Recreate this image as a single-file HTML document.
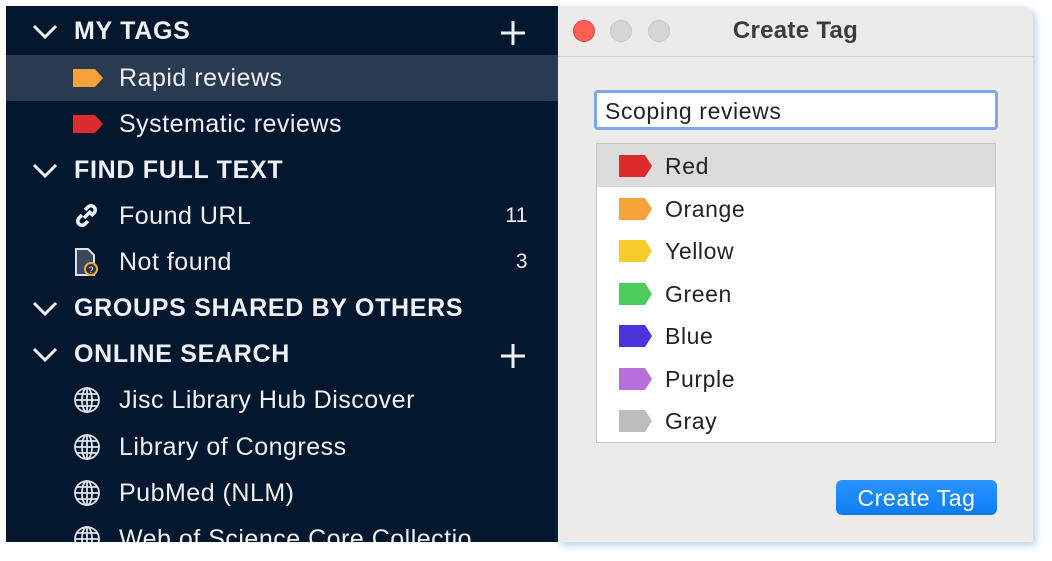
<!DOCTYPE html>
<html><head><style>
body{margin:0;width:1052px;height:561px;background:#fff;position:relative;overflow:hidden;font-family:"Liberation Sans",sans-serif}
#side{position:absolute;left:6px;top:6px;width:552px;height:536px;background:#03172e;overflow:hidden;color:#eef0f3}
.row{position:absolute;left:0;width:552px;height:46px;font-size:25px;line-height:46px;letter-spacing:0.5px;white-space:nowrap}
.hdr{font-weight:bold;font-size:25px;letter-spacing:0.7px}
.hdr .txt{left:68px}
.txt{position:absolute;left:113px;top:0}
.cnt{position:absolute;right:30px;top:0;font-size:21px}
.chev{position:absolute;left:26px;top:16px}
.plus{position:absolute;left:494px;top:12px}
.ic{position:absolute;left:67px;top:13px}
#dlg{position:absolute;left:558px;top:6px;width:475px;height:536px;background:#ecebea;border-top-right-radius:12px;box-shadow:3px 3px 8px rgba(80,150,220,.45)}
#tb{position:absolute;left:0;top:0;width:475px;height:50px;border-bottom:1px solid #d2d1d0}
.dot{position:absolute;top:14px;width:22px;height:22px;border-radius:50%;background:#d6d5d4;border:1px solid #c4c3c2;box-sizing:border-box}
#title{position:absolute;left:0;width:475px;top:11px;text-align:center;font-weight:bold;font-size:24px;color:#3c3c3c;padding-left:120px;box-sizing:border-box;padding-right:120px;letter-spacing:0.3px}
#field{position:absolute;left:36px;top:84px;width:404px;height:40px;border:3px solid #7fa7ea;border-radius:4px;box-sizing:border-box;background:#fff;font-size:23px;line-height:36px;padding-left:8px;color:#222;letter-spacing:0.6px}
#list{position:absolute;left:38px;top:137px;width:400px;height:300px;background:#fff;border:1px solid #c6c6c6;box-sizing:border-box}
.it{position:absolute;left:0;width:398px;height:42.5px;font-size:23px;line-height:44px;color:#222;letter-spacing:0.6px}
.it span{position:absolute;left:68px}
.it svg{position:absolute;left:22px;top:11px}
#btn{position:absolute;left:278px;top:474px;width:161px;height:35px;background:linear-gradient(#2a95ff,#0d7bf5);border-radius:6px;color:#fff;font-size:23px;line-height:36px;text-align:center;letter-spacing:0.6px}
</style></head><body>
<div id="side">
<div class="row hdr" style="top:2px"><svg class="chev" width="26" height="16"><path d="M2 2l11 11 11-11" stroke="#eef0f3" stroke-width="3" fill="none"/></svg><span class="txt">MY TAGS</span><svg class="plus" width="26" height="26"><path d="M13 1v24M1 13h24" stroke="#eef0f3" stroke-width="3"/></svg></div>
<div class="row" style="top:49px;background:#2a3a50"><svg class="ic" width="30" height="22" style="top:12px"><path d="M0 2h22l8 9-8 9H0z" fill="#f6a23a"/></svg><span class="txt">Rapid reviews</span></div>
<div class="row" style="top:95px"><svg class="ic" width="30" height="22" style="top:12px"><path d="M0 2h22l8 9-8 9H0z" fill="#de2c2e"/></svg><span class="txt">Systematic reviews</span></div>
<div class="row hdr" style="top:141px"><svg class="chev" width="26" height="16"><path d="M2 2l11 11 11-11" stroke="#eef0f3" stroke-width="3" fill="none"/></svg><span class="txt">FIND FULL TEXT</span></div>
<div class="row" style="top:187px"><svg class="ic" width="28" height="26" style="top:10px"><path d="M11 15l7-7M9 12l-3 3a4 4 0 006 6l3-3M18 13l3-3a4 4 0 00-6-6l-3 3" stroke="#eef0f3" stroke-width="3.5" fill="none"/></svg><span class="txt">Found URL</span><span class="cnt">11</span></div>
<div class="row" style="top:233px"><svg class="ic" width="28" height="30" style="top:8px"><path d="M3 2h12l6 6v20H3z" fill="#3a4a5e" stroke="#dfe3e8" stroke-width="2"/><circle cx="18" cy="22" r="6" fill="#2a2f3a" stroke="#f2a83a" stroke-width="2"/><text x="15.5" y="26" font-size="9" fill="#fff" font-family="Liberation Sans">?</text></svg><span class="txt">Not found</span><span class="cnt">3</span></div>
<div class="row hdr" style="top:279px"><svg class="chev" width="26" height="16"><path d="M2 2l11 11 11-11" stroke="#eef0f3" stroke-width="3" fill="none"/></svg><span class="txt">GROUPS SHARED BY OTHERS</span></div>
<div class="row hdr" style="top:325px"><svg class="chev" width="26" height="16"><path d="M2 2l11 11 11-11" stroke="#eef0f3" stroke-width="3" fill="none"/></svg><span class="txt">ONLINE SEARCH</span><svg class="plus" width="26" height="26"><path d="M13 1v24M1 13h24" stroke="#eef0f3" stroke-width="3"/></svg></div>
<div class="row" style="top:371px"><svg class="ic" width="28" height="28" style="top:9px"><g stroke="#dfe3e8" stroke-width="1.8" fill="none"><circle cx="14" cy="14" r="12"/><ellipse cx="14" cy="14" rx="5" ry="12"/><path d="M14 2v24M2 14h24M4 8h20M4 20h20"/></g></svg><span class="txt">Jisc Library Hub Discover</span></div>
<div class="row" style="top:418px"><svg class="ic" width="28" height="28" style="top:9px"><g stroke="#dfe3e8" stroke-width="1.8" fill="none"><circle cx="14" cy="14" r="12"/><ellipse cx="14" cy="14" rx="5" ry="12"/><path d="M14 2v24M2 14h24M4 8h20M4 20h20"/></g></svg><span class="txt">Library of Congress</span></div>
<div class="row" style="top:464px"><svg class="ic" width="28" height="28" style="top:9px"><g stroke="#dfe3e8" stroke-width="1.8" fill="none"><circle cx="14" cy="14" r="12"/><ellipse cx="14" cy="14" rx="5" ry="12"/><path d="M14 2v24M2 14h24M4 8h20M4 20h20"/></g></svg><span class="txt">PubMed (NLM)</span></div>
<div class="row" style="top:510px"><svg class="ic" width="28" height="28" style="top:9px"><g stroke="#dfe3e8" stroke-width="1.8" fill="none"><circle cx="14" cy="14" r="12"/><ellipse cx="14" cy="14" rx="5" ry="12"/><path d="M14 2v24M2 14h24M4 8h20M4 20h20"/></g></svg><span class="txt">Web of Science Core Collectio</span></div>
</div>
<div id="dlg">
<div id="tb"><div class="dot" style="left:15px;background:#fe5f57;border-color:#e2463f"></div><div class="dot" style="left:52px"></div><div class="dot" style="left:90px"></div><div id="title">Create Tag</div></div>
<div id="field">Scoping reviews</div>
<div id="list">
<div class="it" style="top:0;background:#dcdcdc"><svg width="34" height="22"><path d="M0 0h26l7 11-7 11H0z" fill="#de2c2e"/></svg><span>Red</span></div>
<div class="it" style="top:42.5px"><svg width="34" height="22"><path d="M0 0h26l7 11-7 11H0z" fill="#f6a23a"/></svg><span>Orange</span></div>
<div class="it" style="top:85px"><svg width="34" height="22"><path d="M0 0h26l7 11-7 11H0z" fill="#f7cd2e"/></svg><span>Yellow</span></div>
<div class="it" style="top:127.5px"><svg width="34" height="22"><path d="M0 0h26l7 11-7 11H0z" fill="#4ccc5b"/></svg><span>Green</span></div>
<div class="it" style="top:170px"><svg width="34" height="22"><path d="M0 0h26l7 11-7 11H0z" fill="#4a34dc"/></svg><span>Blue</span></div>
<div class="it" style="top:212.5px"><svg width="34" height="22"><path d="M0 0h26l7 11-7 11H0z" fill="#b66fdb"/></svg><span>Purple</span></div>
<div class="it" style="top:255px"><svg width="34" height="22"><path d="M0 0h26l7 11-7 11H0z" fill="#bdbdbd"/></svg><span>Gray</span></div>
</div>
<div id="btn">Create Tag</div>
</div>
</body></html>
